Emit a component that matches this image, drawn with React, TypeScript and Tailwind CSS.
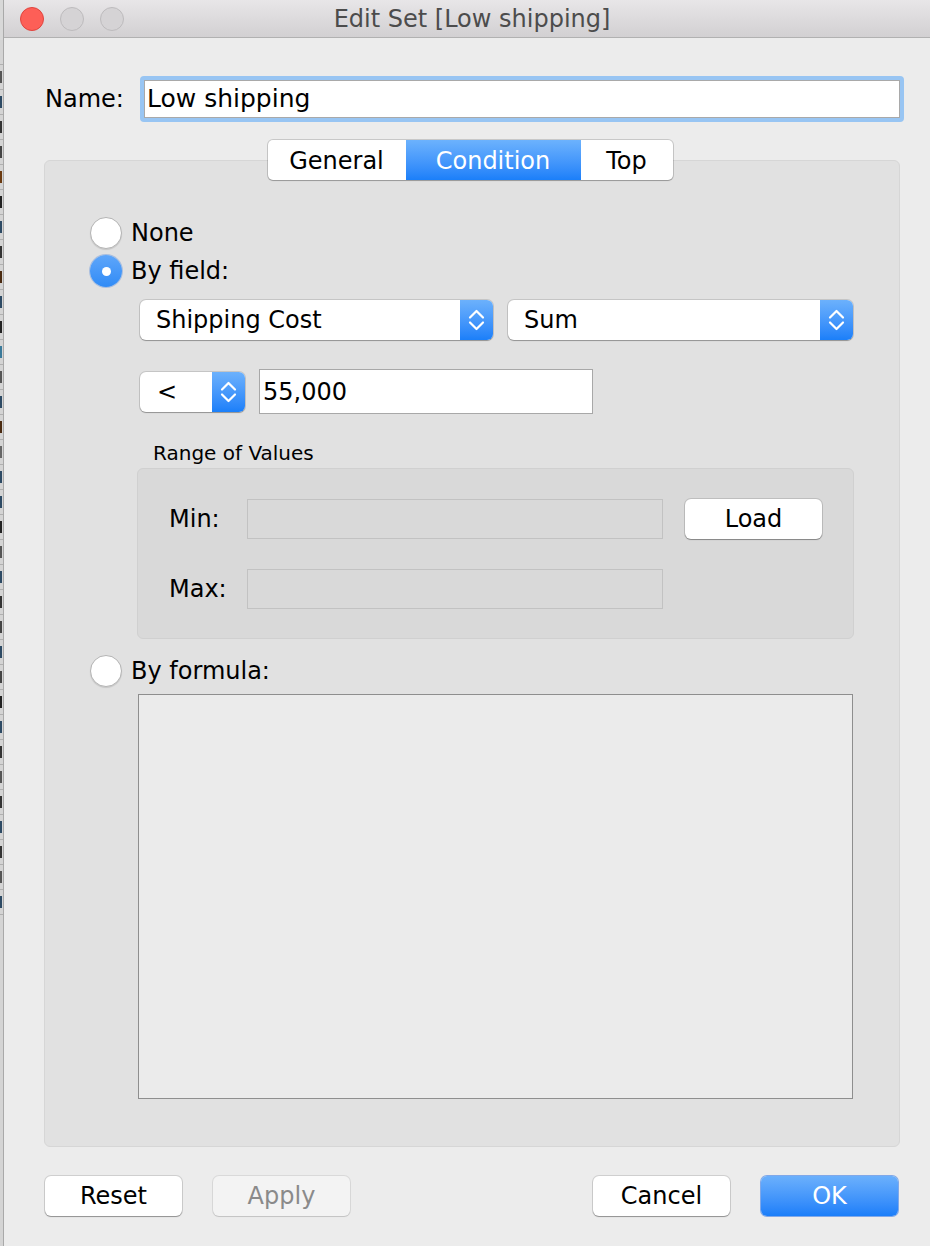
import React from "react";

const font = { fontFamily: '"DejaVu Sans", "Liberation Sans", sans-serif' };

function Chevrons() {
  return (
    <svg width="17" height="26" viewBox="0 0 17 26" fill="none">
      <path d="M2 10.5 L8.5 4 L15 10.5" stroke="white" strokeWidth="2.2" strokeLinecap="round" strokeLinejoin="round" />
      <path d="M2 15.5 L8.5 22 L15 15.5" stroke="white" strokeWidth="2.2" strokeLinecap="round" strokeLinejoin="round" />
    </svg>
  );
}

function Select({ label, width, textPad = "pl-4" }: { label: string; width: string; textPad?: string }) {
  return (
    <div
      className={`${width} h-[40px] flex rounded-[6px] bg-white shadow-[0_0_0_1px_rgba(0,0,0,0.12),0_1px_1px_rgba(0,0,0,0.25)] overflow-hidden`}
    >
      <div className={`flex-1 flex items-center ${textPad} text-[24px] text-black`}>{label}</div>
      <div className="w-[33px] flex items-center justify-center bg-gradient-to-b from-[#6cb1fc] to-[#1a7ff9]">
        <Chevrons />
      </div>
    </div>
  );
}

function Radio({ checked }: { checked?: boolean }) {
  if (checked) {
    return (
      <div className="w-[32px] h-[32px] rounded-full bg-gradient-to-b from-[#5ea6fa] to-[#2f8bf6] flex items-center justify-center shadow-[0_0_0_1px_rgba(40,110,220,0.3)]">
        <div className="w-[9px] h-[9px] rounded-full bg-white" />
      </div>
    );
  }
  return (
    <div className="w-[32px] h-[32px] rounded-full bg-white border border-[#b4b4b4] shadow-[0_1px_1px_rgba(0,0,0,0.12)]" />
  );
}

function Button({ label, variant = "default" }: { label: string; variant?: "default" | "disabled" | "primary" }) {
  const cls =
    variant === "primary"
      ? "bg-gradient-to-b from-[#6bb0fc] to-[#1a7ef9] text-white shadow-[0_0_0_1px_rgba(20,100,230,0.5)]"
      : variant === "disabled"
      ? "bg-[#f3f3f3] text-[#8a8a8a] shadow-[0_0_0_1px_rgba(0,0,0,0.08),0_1px_1px_rgba(0,0,0,0.1)]"
      : "bg-white text-black shadow-[0_0_0_1px_rgba(0,0,0,0.12),0_1px_1px_rgba(0,0,0,0.3)]";
  return (
    <div className={`w-[137px] h-[40px] rounded-[6px] flex items-center justify-center text-[24px] ${cls}`}>
      {label}
    </div>
  );
}

export default function App() {
  const marks = [
    "", "#555", "#2d4a64", "#333", "#444", "#6b3a10", "#222", "#2d4a64", "#333", "#4a2a10",
    "#2d4a64", "#222", "#3a7a9a", "#555", "#2d4a64", "#4a2a10", "#666", "#2d4a64", "#2d4a64",
    "#222", "#555", "#2d4a64", "#333", "#444", "#2d4a64", "#444", "#222", "#2d4a64", "#333",
    "#555", "#333", "#2d4a64", "#333", "#555", "#2d4a64",
  ];
  return (
    <div className="w-[930px] h-[1246px] flex overflow-hidden bg-[#ececec]" style={font}>
      {/* background app strip */}
      <div className="w-[3px] flex flex-col bg-[#d4d4d4]">
        <div className="h-[40px] bg-[#d8d8d8]" />
        {marks.map((c, i) => (
          <div key={i} className="h-[25px] border-b border-[#b0b0b0] flex items-center">
            <div className="w-[2px] h-[12px]" style={{ backgroundColor: c || "transparent" }} />
          </div>
        ))}
      </div>
      {/* window */}
      <div className="flex-1 flex flex-col border-l border-[#a9a9a9] bg-[#ececec]">
        {/* title bar */}
        <div className="h-[38px] flex items-center bg-gradient-to-b from-[#e8e6e8] to-[#d2d0d2] border-b border-[#b1b1b1]">
          <div className="flex items-center gap-[16px] pl-[16px]">
            <div className="w-[24px] h-[24px] rounded-full bg-[#fd5f57] border border-[#e0443e]" />
            <div className="w-[24px] h-[24px] rounded-full bg-[#d5d3d5] border border-[#bdbbbd]" />
            <div className="w-[24px] h-[24px] rounded-full bg-[#d5d3d5] border border-[#bdbbbd]" />
          </div>
          <div className="flex-1 text-center text-[24px] text-[#4c4c4c] pr-[140px] pl-[30px]">
            Edit Set [Low shipping]
          </div>
        </div>

        {/* body */}
        <div className="flex flex-col pl-[40px] pr-[26px]">
          {/* name row */}
          <div className="flex items-center mt-[38px] h-[46px]">
            <div className="w-[96px] text-[24px] text-black pl-[1px]">Name:</div>
            <div className="flex-1 h-[46px] rounded-[4px] bg-[#98c5f3] p-[4px]">
              <div className="w-full h-full bg-white border border-[#a9a9a9] flex items-center pl-[2px] text-[25px] text-black">
                Low shipping
              </div>
            </div>
          </div>

          {/* group box */}
          <div className="mt-[38px] mr-[4px] h-[987px] rounded-[6px] bg-[#e1e1e1] border border-[#d6d6d6] flex flex-col">
            {/* tabs */}
            <div className="flex justify-center -mt-[21px]">
              <div className="flex h-[40px] rounded-[5px] bg-white shadow-[0_0_0_1px_rgba(0,0,0,0.15),0_1px_1px_rgba(0,0,0,0.2)] overflow-hidden text-[24px] mr-[4px]">
                <div className="w-[138px] flex items-center justify-center pt-[2px] text-black">General</div>
                <div className="w-[175px] flex items-center justify-center pt-[2px] text-white bg-gradient-to-b from-[#6cb2fd] to-[#1a7ff9]">
                  Condition
                </div>
                <div className="w-[92px] flex items-center justify-center pt-[2px] text-black">Top</div>
              </div>
            </div>

            <div className="flex flex-col pl-[45px] pt-[34px]">
              <div className="h-[38px] flex items-center gap-[9px]">
                <Radio />
                <div className="text-[24px] text-black">None</div>
              </div>
              <div className="h-[38px] flex items-center gap-[9px]">
                <Radio checked />
                <div className="text-[24px] text-black">By field:</div>
              </div>

              <div className="pl-[50px] flex flex-col">
                <div className="flex gap-[15px] mt-[10px]">
                  <Select label="Shipping Cost" width="w-[353px]" />
                  <Select label="Sum" width="w-[345px]" />
                </div>

                <div className="flex items-center gap-[14px] mt-[29px] h-[45px]">
                  <Select label="<" width="w-[105px]" textPad="pl-[17px]" />
                  <div className="w-[334px] h-[45px] bg-white border border-[#a8a8a8] flex items-center pl-[3px] text-[24px] text-black">
                    55,000
                  </div>
                </div>

                <div className="mt-[27px] pl-[13px] text-[20px] text-black leading-[24px]">Range of Values</div>

                <div className="mt-[3px] -ml-[3px] w-[717px] h-[171px] rounded-[6px] bg-[#d9d9d9] border border-[#d0d0d0] flex flex-col pt-[30px] pl-[19px]">
                  <div className="flex items-center h-[40px]">
                    <div className="w-[90px] text-[24px] text-black pl-[12px]">Min:</div>
                    <div className="w-[416px] h-[40px] border border-[#c2c2c2] bg-[#d9d9d9]" />
                    <div className="ml-[22px]">
                      <Button label="Load" />
                    </div>
                  </div>
                  <div className="flex items-center h-[40px] mt-[30px]">
                    <div className="w-[90px] text-[24px] text-black pl-[12px]">Max:</div>
                    <div className="w-[416px] h-[40px] border border-[#c2c2c2] bg-[#d9d9d9]" />
                  </div>
                </div>
              </div>

              <div className="h-[38px] flex items-center gap-[9px] mt-[13px]">
                <Radio />
                <div className="text-[24px] text-black">By formula:</div>
              </div>

              <div className="ml-[48px] mt-[4px] w-[715px] h-[405px] bg-[#ebebeb] border border-[#8e8e8e]" />
            </div>
          </div>

          {/* bottom buttons */}
          <div className="flex items-center mt-[29px] pl-[1px] pr-[6px]">
            <Button label="Reset" />
            <div className="ml-[31px]">
              <Button label="Apply" variant="disabled" />
            </div>
            <div className="flex-1" />
            <Button label="Cancel" />
            <div className="ml-[31px]">
              <Button label="OK" variant="primary" />
            </div>
          </div>
        </div>
      </div>
    </div>
  );
}
